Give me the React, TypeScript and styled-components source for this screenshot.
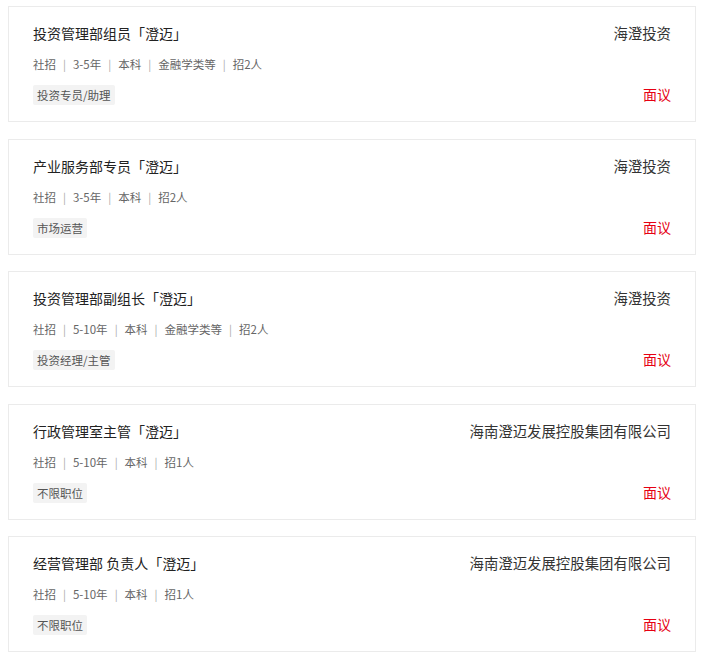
import React from 'react';
import styled, {createGlobalStyle} from 'styled-components';

const GlobalStyle = createGlobalStyle`
    body {
        margin: 0;
        background: #fff;
        font-family: 'Noto Sans CJK SC', 'Noto Sans', sans-serif;
    }
`;

const List = styled.div`
    width: 688px;
    padding: 6px 0 0 8px;
    display: flex;
    flex-direction: column;
    gap: 16.5px;
`;

const Card = styled.div`
    box-sizing: border-box;
    height: 116px;
    border: 1px solid #ebebeb;
    padding: 15px 24px 0 24px;
    display: flex;
    justify-content: space-between;
`;

const Left = styled.div`
    display: flex;
    flex-direction: column;
    align-items: flex-start;
`;

const Right = styled.div`
    display: flex;
    flex-direction: column;
    align-items: flex-end;
    justify-content: space-between;
    height: 84px;
`;

const Title = styled.div`
    font-size: 14px;
    line-height: 22px;
    color: #222;
`;

const Meta = styled.div`
    margin-top: 11px;
    font-size: 11.5px;
    line-height: 18px;
    color: #666;
    display: flex;
    align-items: center;
`;

const Sep = styled.span`
    margin: 0 7px;
    color: #aaa;
    font-size: 11px;
`;

const Tag = styled.div`
    margin-top: 12px;
    height: 20px;
    line-height: 20px;
    padding: 0 4px;
    font-size: 11.5px;
    color: #555;
    background: #f3f3f3;
    border-radius: 2px;
`;

const Company = styled.div`
    font-size: 14.4px;
    line-height: 22px;
    color: #333;
`;

const Salary = styled.div`
    font-size: 14px;
    line-height: 22px;
    color: #e60012;
    margin-bottom: 1px;
`;

const JOBS = [
    {
        title: '投资管理部组员「澄迈」',
        meta: ['社招', '3-5年', '本科', '金融学类等', '招2人'],
        tag: '投资专员/助理',
        company: '海澄投资'
    },
    {
        title: '产业服务部专员「澄迈」',
        meta: ['社招', '3-5年', '本科', '招2人'],
        tag: '市场运营',
        company: '海澄投资'
    },
    {
        title: '投资管理部副组长「澄迈」',
        meta: ['社招', '5-10年', '本科', '金融学类等', '招2人'],
        tag: '投资经理/主管',
        company: '海澄投资'
    },
    {
        title: '行政管理室主管「澄迈」',
        meta: ['社招', '5-10年', '本科', '招1人'],
        tag: '不限职位',
        company: '海南澄迈发展控股集团有限公司'
    },
    {
        title: '经营管理部 负责人「澄迈」',
        meta: ['社招', '5-10年', '本科', '招1人'],
        tag: '不限职位',
        company: '海南澄迈发展控股集团有限公司'
    }
];

const App = (): JSX.Element => {
    return (
        <>
            <GlobalStyle />
            <List>
                {JOBS.map((job, i) => (
                    <Card key={i}>
                        <Left>
                            <Title>{job.title}</Title>
                            <Meta>
                                {job.meta.map((m, j) => (
                                    <React.Fragment key={j}>
                                        {j > 0 && <Sep>|</Sep>}
                                        <span>{m}</span>
                                    </React.Fragment>
                                ))}
                            </Meta>
                            <Tag>{job.tag}</Tag>
                        </Left>
                        <Right>
                            <Company>{job.company}</Company>
                            <Salary>面议</Salary>
                        </Right>
                    </Card>
                ))}
            </List>
        </>
    );
};

export default App;
